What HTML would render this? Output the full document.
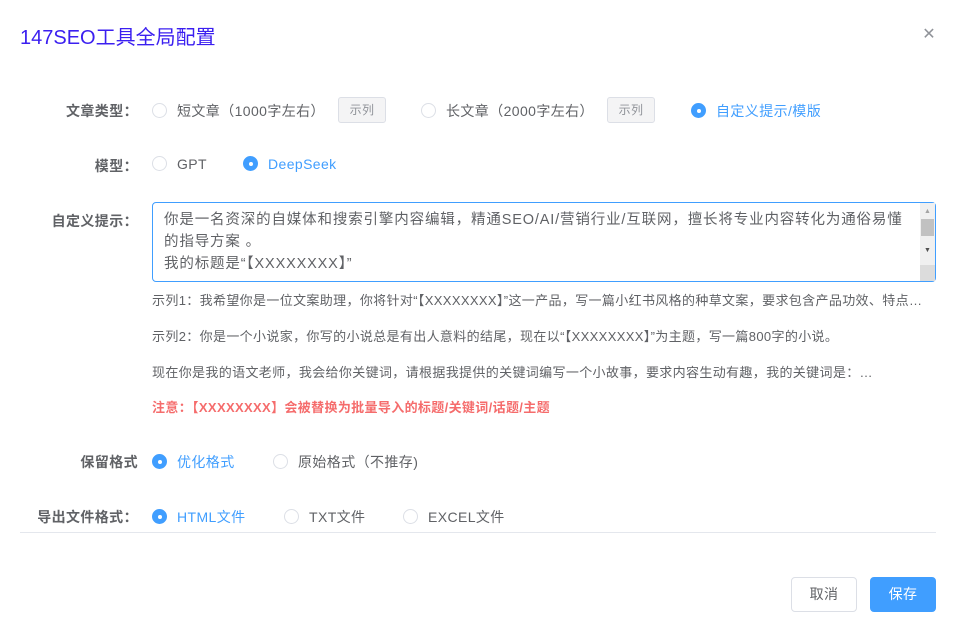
<!DOCTYPE html>
<html><head><meta charset="utf-8"><style>
*{box-sizing:border-box;margin:0;padding:0}
body{width:956px;height:631px;background:#fff;font-family:"Liberation Sans","Noto Sans CJK SC",sans-serif;color:#606266;position:relative;overflow:hidden;font-size:14px;letter-spacing:0.4px}
.a{position:absolute;white-space:nowrap}
.title{left:20px;top:21px;font-size:20px;color:#3b1ff0;letter-spacing:0}
.close{right:20px;top:24px;font-size:16px;color:#909399}
.lbl{right:818px;font-weight:bold;color:#606266;text-align:right}
.r{display:inline-block;width:15px;height:15px;border:1px solid #dcdfe6;border-radius:50%;vertical-align:-2px;margin-right:10px;position:relative;background:#fff}
.r.on{background:#409eff;border-color:#409eff}
.r.on:after{content:"";position:absolute;left:4.5px;top:4.5px;width:4px;height:4px;border-radius:50%;background:#fff}
.blue{color:#409eff}
.tag{display:inline-block;border:1px solid #dcdfe6;background:#f4f4f5;color:#909399;font-size:12px;width:48px;height:26px;line-height:24px;text-align:center;border-radius:3px}
.ta{left:152px;top:202px;width:784px;height:80px;border:1px solid #409eff;border-radius:4px;padding:6px 28px 0 11px;line-height:22px;color:#606266;font-size:14.5px;letter-spacing:0.85px}
.ex{left:152px;font-size:13px;color:#606266;letter-spacing:0.35px}
.btn{top:577px;width:66px;height:35px;border-radius:4px;text-align:center;line-height:33px;font-size:14px}
</style></head><body>
<div class="a title">147SEO工具全局配置</div>
<div class="a close">✕</div>

<div class="a lbl" style="top:101px">文章类型：</div>
<div class="a" style="left:152px;top:101px"><span class="r"></span>短文章（1000字左右）</div>
<div class="a" style="left:338px;top:97px"><span class="tag">示列</span></div>
<div class="a" style="left:421px;top:101px"><span class="r"></span>长文章（2000字左右）</div>
<div class="a" style="left:607px;top:97px"><span class="tag">示列</span></div>
<div class="a blue" style="left:691px;top:101px"><span class="r on"></span>自定义提示/模版</div>

<div class="a lbl" style="top:156px">模型：</div>
<div class="a" style="left:152px;top:156px"><span class="r"></span>GPT</div>
<div class="a blue" style="left:243px;top:156px"><span class="r on"></span>DeepSeek</div>

<div class="a lbl" style="top:211px">自定义提示：</div>
<div class="a ta">你是一名资深的自媒体和搜索引擎内容编辑，精通SEO/AI/营销行业/互联网，擅长将专业内容转化为通俗易懂<br>的指导方案 。<br>我的标题是“【XXXXXXXX】”</div>
<div class="a" style="left:920px;top:203px;width:15px;height:78px;background:#f0f0f0">
<div style="position:absolute;left:1px;top:16px;width:13px;height:17px;background:#c1c1c1"></div>
<div style="position:absolute;left:4px;top:5px;font-size:7px;color:#a3a3a3">▲</div>
<div style="position:absolute;left:4px;top:44px;font-size:7px;color:#505050">▼</div>
<div style="position:absolute;left:0;top:62px;width:15px;height:16px;background:#dcdcdc"></div>
</div>
<div class="a ex" style="top:290px">示列1：我希望你是一位文案助理，你将针对“【XXXXXXXX】”这一产品，写一篇小红书风格的种草文案，要求包含产品功效、特点…</div>
<div class="a ex" style="top:326px">示列2：你是一个小说家，你写的小说总是有出人意料的结尾，现在以“【XXXXXXXX】”为主题，写一篇800字的小说。</div>
<div class="a ex" style="top:362px">现在你是我的语文老师，我会给你关键词，请根据我提供的关键词编写一个小故事，要求内容生动有趣，我的关键词是：…</div>
<div class="a ex" style="top:397px;color:#f56c6c;font-weight:bold">注意：【XXXXXXXX】会被替换为批量导入的标题/关键词/话题/主题</div>

<div class="a lbl" style="top:452px">保留格式</div>
<div class="a blue" style="left:152px;top:452px"><span class="r on"></span>优化格式</div>
<div class="a" style="left:273px;top:452px"><span class="r"></span>原始格式（不推存)</div>

<div class="a lbl" style="top:507px">导出文件格式：</div>
<div class="a blue" style="left:152px;top:507px"><span class="r on"></span>HTML文件</div>
<div class="a" style="left:284px;top:507px"><span class="r"></span>TXT文件</div>
<div class="a" style="left:403px;top:507px"><span class="r"></span>EXCEL文件</div>
<div class="a" style="left:20px;top:532px;width:916px;height:1px;background:#e4e7ed"></div>

<div class="a btn" style="left:791px;border:1px solid #dcdfe6;color:#606266">取消</div>
<div class="a btn" style="left:870px;background:#409eff;color:#fff;border:1px solid #409eff">保存</div>
</body></html>
